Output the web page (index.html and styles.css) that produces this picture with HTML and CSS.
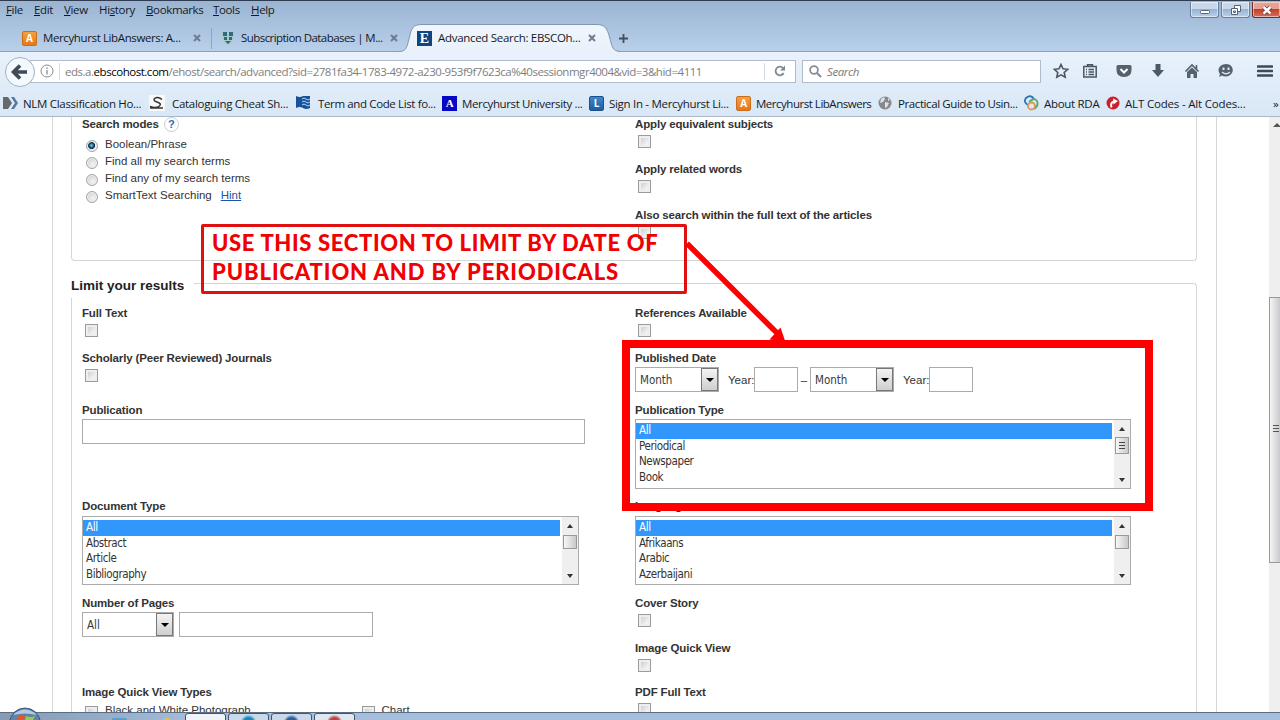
FILE: index.html
```html
<!DOCTYPE html>
<html lang="en">
<head>
<meta charset="utf-8">
<title>Advanced Search: EBSCOhost</title>
<link rel="stylesheet" href="styles.css">
</head>
<body>
<div class="window">
  <header class="titlebar">
    <div class="menu-row">
      <nav class="menu"><span><u>F</u>ile</span><span><u>E</u>dit</span><span><u>V</u>iew</span><span>Hi<u>s</u>tory</span><span><u>B</u>ookmarks</span><span><u>T</u>ools</span><span><u>H</u>elp</span></nav>
      <div class="controls">
        <span class="control"><svg width="28" height="16"><rect x="9.5" y="8.500" width="9" height="3" rx="1" fill="#fff" stroke="#566376"/></svg></span>
        <span class="control"><svg width="28" height="16" fill="#fff" stroke="#566376"><path d="M12.500 3.500h6v6h-6z"/><path d="M9.500 6.500h6v6h-6z"/><path d="M11.500 9h2v1.500h-2z"/></svg></span>
        <span class="control control-close"><svg width="28" height="16"><path d="M10.500 5l7 6.500M17.500 5l-7 6.500" stroke="#6b3a3a" stroke-width="4"/><path d="M10.500 5l7 6.500M17.500 5l-7 6.500" stroke="#fff" stroke-width="2.400"/></svg></span>
      </div>
    </div>
    <div class="tabs">
      <div class="tab tab-one"><span class="fav fav-orange">A</span><span class="tab-text t1">Mercyhurst LibAnswers: A...</span><svg class="x" width="8" height="8"><path d="M1 1l6 6M7 1l-6 6"/></svg></div>
      <div class="tab tab-two"><svg class="shield" width="13" height="15"><path d="M0 1h12v6q-1 5-6 7q-5-2-6-7z" fill="#a9c8cc"/><path d="M1 1h4v4H1zM7 1h4v4H7zM2 6h3v3H2zM7 6h3v3H7zM3 10h6l-3 3z" fill="#2c6c78"/></svg><span class="tab-text t2">Subscription Databases | M...</span><svg class="x" width="8" height="8"><path d="M1 1l6 6M7 1l-6 6"/></svg></div>
      <div class="tab tab-active">
        <svg class="tab-shape" width="222" height="29"><defs><linearGradient id="tg" x2="0" y2="1"><stop stop-color="#f0f6fc"/><stop offset="1" stop-color="#e8f1fb"/></linearGradient></defs><path d="M0 29V27.500C8 27.500 8 22 10.500 13C12.500 4 14 .500 23 .500H197C206 .500 208 4 210.500 13C213 22 213 27.500 222 27.500V29Z" fill="url(#tg)"/><path d="M0 27.500C8 27.500 8 22 10.500 13C12.500 4 14 .500 23 .500H197C206 .500 208 4 210.500 13C213 22 213 27.500 222 27.500" fill="none" stroke="#8196b1"/></svg>
        <span class="fav fav-e">E</span><span class="tab-text t3">Advanced Search: EBSCOh...</span><svg class="x" width="8" height="8"><path d="M1 1l6 6M7 1l-6 6"/></svg>
      </div>
      <svg class="plus" width="11" height="11"><path d="M5.500 1v9M1 5.500h9" stroke="#444f5c" stroke-width="1.800"/></svg>
    </div>
  </header>

  <div class="navbar">
    <div class="back"><svg width="30" height="30"><circle cx="15" cy="15" r="14.500" fill="#f4f9fe" stroke="#9fb0c3"/><path d="M15 8.500l-6.500 6.500l6.500 6.500M9.500 15h12.500" fill="none" stroke="#3f4a57" stroke-width="3.600"/></svg></div>
    <div class="url">
      <svg class="info" width="14" height="14"><circle cx="7" cy="7" r="6" fill="none" stroke="#8c8c8c"/><path d="M7 6v4.500M7 3.500v1.500" stroke="#8c8c8c" stroke-width="1.300"/></svg>
      <span class="url-text">eds.a.<b>ebscohost.com</b>/ehost/search/advanced?sid=2781fa34-1783-4972-a230-953f9f7623ca%40sessionmgr4004&amp;vid=3&amp;hid=4111</span>
      <span class="reload"><svg width="12" height="12"><path d="M9.700 8A4.300 4.300 0 1 1 9 3" fill="none" stroke="#7d8994" stroke-width="1.800"/><path d="M11 .500v5H6z" fill="#7d8994"/></svg></span>
    </div>
    <div class="search"><svg width="13" height="13" fill="none" stroke="#8a8f96"><circle cx="5" cy="5" r="3.900" stroke-width="1.800"/><path d="M8 8l4 4" stroke-width="2.200"/></svg><i>Search</i></div>
    <div class="tools">
      <svg width="16" height="16"><path d="M8 1.500l2 4.300l4.700.500l-3.500 3.200l1 4.700L8 11.900l-4.200 2.300l1-4.700L1.300 6.300L6 5.800z" fill="none" stroke="#4b5663" stroke-width="1.600"/></svg>
      <svg width="16" height="16" fill="none" stroke="#4b5663" stroke-width="1.500"><path d="M1.800 3.500h12.400v10.500H1.800zM5.500 3.500V1.700h5v1.800M4 6.500h1M4 9h1M4 11.500h1M6.500 6.500H12M6.500 9H12M6.500 11.500H12"/></svg>
      <svg width="16" height="16"><path d="M2 2h12q1.500 0 1.500 1.500V7q0 7-7.500 7T.500 7V3.500Q.500 2 2 2z" fill="#56616e"/><path d="M4.500 6l3.500 3.500l3.500-3.500" fill="none" stroke="#fff" stroke-width="2"/></svg>
      <svg width="16" height="16"><path d="M5.500 1h5v6h3.500l-6 7l-6-7h3.500z" fill="#4d5966"/></svg>
      <svg width="16" height="16"><path d="M1.500 8.500L8 2l6.500 6.500M12.500 2v4" fill="none" stroke="#56616e" stroke-width="1.600"/><path d="M3 9l5-4.500L13 9v6h-3.500v-4h-3v4H3z" fill="#56616e"/></svg>
      <svg width="16" height="16"><path d="M8 1c9 0 9 12 0 12.500q-3 0-4-1l-3 1.500l1-3C-2 6 3 1 8 1z" fill="#56616e"/><path d="M4.500 4.500h2v2.500h-2zM9.500 4.500h2v2.500h-2z" fill="#dce9f6"/><path d="M4 9q4 3.500 8 0" fill="none" stroke="#dce9f6" stroke-width="1.300"/></svg>
    </div>
    <svg class="burger" width="16" height="14"><path d="M1 2.500h14M1 7h14M1 11.500h14" stroke="#3f4a57" stroke-width="2.600" stroke-linecap="round"/></svg>
  </div>

  <div class="bookmarks">
    <svg width="16" height="14"><path d="M0 1h5l4 6l-4 6H0z" fill="#65686c"/><path d="M8 1h3l4 6l-4 6H8l4-6z" fill="#5378a4"/></svg><span class="b1">NLM Classification Ho...</span>
    <svg width="16" height="16"><rect width="16" height="16" fill="#f8f8f8"/><path d="M13 4.500Q9 1 5.500 3.500Q4 6 8 7Q13 8.500 10.500 11Q7 13.500 1 11.500M1 13h13" fill="none" stroke="#333" stroke-width="1.500"/></svg><span class="b2">Cataloguing Cheat Sh...</span>
    <svg width="15" height="14"><path d="M0 0q4 2 7 0t7 0v12q-4 2-7 0t-7 0z" fill="#17519b"/><path d="M6 3q2-2 4 0t4 0M6 6q2-2 4 0t4 0M6 9q2-2 4 0t4 0" fill="none" stroke="#b5d5ef"/></svg><span class="b3">Term and Code List fo...</span>
    <span class="fav fav-a">A</span><span class="b4">Mercyhurst University ...</span>
    <span class="fav fav-l">L</span><span class="b5">Sign In - Mercyhurst Li...</span>
    <span class="fav fav-orange">A</span><span class="b6">Mercyhurst LibAnswers</span>
    <svg width="14" height="14"><circle cx="7" cy="7" r="6.500" fill="#85898d"/><path d="M3 3l3-2l1 2l-2 3l-3 1zM7 6l4 1l-2 4l-2 1zM10 2l2 2l-2 1z" fill="#dfe3e6"/></svg><span class="b7">Practical Guide to Usin...</span>
    <svg width="15" height="16" fill="none" stroke-width="1.800"><path d="M4 10Q-1 7 2 3Q7-1 10 4" stroke="#2676b6"/><path d="M5 7q5-5 8-1q2 5-3 8" stroke="#56a866"/><circle cx="7.500" cy="11" r="3.500" stroke="#e09455"/></svg><span class="b8">About RDA</span>
    <svg width="14" height="14"><circle cx="7" cy="7" r="6.500" fill="#c8202c"/><path d="M5.500 11.500Q4 6.500 8 5.500" fill="none" stroke="#fff" stroke-width="2"/><path d="M7 2.500l5 2.500l-4.500 3.500z" fill="#fff"/></svg><span class="b9">ALT Codes - Alt Codes...</span>
    <span class="more">»</span>
  </div>

  <main class="viewport">
    <div class="page">
      <div class="frame">
        <section class="modes">
          <div class="mode-list">
            <div class="label mode-title"><span>Search modes</span><span class="help">?</span></div>
            <div class="radio-row"><i class="radio on"></i><span>Boolean/Phrase</span></div>
            <div class="radio-row"><i class="radio"></i><span>Find all my search terms</span></div>
            <div class="radio-row"><i class="radio"></i><span>Find any of my search terms</span></div>
            <div class="radio-row"><i class="radio"></i><span>SmartText Searching</span><a>Hint</a></div>
          </div>
          <div class="expanders">
            <div class="field"><div class="label">Apply equivalent subjects</div><i class="check"></i></div>
            <div class="field"><div class="label">Apply related words</div><i class="check"></i></div>
            <div class="field"><div class="label">Also search within the full text of the articles</div><i class="check"></i></div>
          </div>
        </section>
        <div class="legend"><h2>Limit your results</h2><span class="rule"></span></div>
        <section class="limits">
          <div class="field"><div class="label">Full Text</div><i class="check"></i></div>
          <div class="field"><div class="label">References Available</div><i class="check"></i></div>
          <div class="field"><div class="label">Scholarly (Peer Reviewed) Journals</div><i class="check"></i></div>
          <div class="field"><div class="label">Published Date</div>
            <div class="controls-row"><span class="select month">Month<i class="drop"></i></span><span class="year">Year:</span><span class="input short"></span><span class="dash">–</span><span class="select month">Month<i class="drop"></i></span><span class="year">Year:</span><span class="input short"></span></div></div>
          <div class="field"><div class="label">Publication</div><div class="controls-row"><span class="input wide"></span></div></div>
          <div class="field"><div class="label">Publication Type</div>
            <div class="list right"><div class="options"><span class="sel">All</span><span>Periodical</span><span>Newspaper</span><span>Book</span></div><div class="bar"><i class="up"></i><i class="thumb grip"></i><i class="down"></i></div></div></div>
          <div class="field"><div class="label">Document Type</div>
            <div class="list low"><div class="options"><span class="sel">All</span><span>Abstract</span><span>Article</span><span>Bibliography</span></div><div class="bar"><i class="up"></i><i class="thumb"></i><i class="down"></i></div></div></div>
          <div class="field"><div class="label">Language</div>
            <div class="list low right"><div class="options"><span class="sel">All</span><span>Afrikaans</span><span>Arabic</span><span>Azerbaijani</span></div><div class="bar"><i class="up"></i><i class="thumb"></i><i class="down"></i></div></div></div>
          <div class="field"><div class="label">Number of Pages</div><div class="controls-row pages"><span class="select count">All<i class="drop"></i></span><span class="input mid"></span></div></div>
          <div class="field"><div class="label">Cover Story</div><i class="check"></i></div>
          <div class="field"></div>
          <div class="field"><div class="label">Image Quick View</div><i class="check"></i></div>
          <div class="field"><div class="label">Image Quick View Types</div><div class="types"><i class="check"></i><span>Black and White Photograph</span><i class="check"></i><span>Chart</span></div></div>
          <div class="field"><div class="label">PDF Full Text</div><i class="check"></i></div>
        </section>
      </div>
    </div>
    <div class="scrollbar"><i class="sb-up"></i><div class="sb-thumb"><i></i></div></div>
  </main>

  <footer class="taskbar">
    <i class="glow g1"></i><i class="glow g2"></i>
    <div class="apps"><span class="app app-white"></span><span class="app c1"></span><span class="app c2"></span><span class="app c3"></span></div>
    <svg class="orb" width="34" height="13"><circle cx="17" cy="16.500" r="15.500" fill="#5c84ac" stroke="#385878"/><path d="M5 8Q17-3 29 8Q17 5 5 8z" fill="#b4cbe0"/><path d="M8 13q3-7 9-5l-1 5z" fill="#e2582d"/><path d="M18 9q5 2 9 0l-2 4h-8z" fill="#9cc750"/></svg>
  </footer>

  <div class="callout"><div class="c-line1">USE THIS SECTION TO LIMIT BY DATE OF</div><div class="c-line2">PUBLICATION AND BY PERIODICALS</div></div>
  <svg class="arrow" width="110" height="110"><path d="M4 5.500L95 96" stroke="#f00" stroke-width="5.500"/><path d="M86.500 101.500L97.500 89.500L102.500 104z" fill="#f00"/></svg>
  <div class="highlight"></div>
</div>
</body>
</html>
```
FILE: styles.css
```css
* { box-sizing: border-box; }
body { margin: 0; font-family: "Open Sans", "Noto Sans", sans-serif; font-size: 12px; color: #15191f; overflow: hidden; }
i { font-style: normal; }
svg { display: block; flex: none; }
.window { position: relative; width: 1280px; height: 720px; display: flex; flex-direction: column; overflow: hidden; background: #fff; }

/* Title bar */
.titlebar { height: 52px; flex: none; border-top: 1px solid #2f3d52; border-bottom: 1px solid #8ba0bb; background: linear-gradient(#9bb4d2, #b8d0ea); }
.menu-row { display: flex; justify-content: space-between; height: 23px; }
.menu { display: grid; grid-template-columns: 28px 30px 35px 47px 67px 38px 40px; padding-left: 6px; line-height: 18px; font-size: 11.5px; letter-spacing: -.35px; white-space: nowrap; }
.controls { display: flex; gap: 2px; padding-top: 1px; margin-right: -1px; }
.control { width: 29px; height: 16px; border: 1px solid #67809f; border-top: 0; border-radius: 0 0 3px 3px; background: linear-gradient(#c7d8eb 45%, #98b3d2 50%, #b9d0e8); box-shadow: inset 0 0 0 1px rgba(255,255,255,.5); }
.control-close { background: linear-gradient(#e5a194 45%, #c2412c 50%, #d4705c); border-color: #6c2d2d; }
.tabs { display: flex; height: 28px; align-items: center; }
.tab { position: relative; display: flex; align-items: center; height: 28px; white-space: nowrap; }
.tab-text { font-size: 11.5px; letter-spacing: -.3px; line-height: 16px; }
.t1 { letter-spacing: -.38px; }
.t2 { letter-spacing: -.56px; }
.tab .x { position: relative; margin-left: auto; stroke: #6d7c8f; stroke-width: 2; }
.tab-one { width: 212px; padding: 0 11px 0 22px; }
.tab-one .tab-text { margin-left: 6px; }
.tab-one::after { content: ""; position: absolute; right: 0; top: 4px; height: 21px; width: 1px; background: #8fa5c0; }
.tab-two { width: 190px; padding: 0 4px 0 10px; }
.tab-two .tab-text { margin-left: 6px; }
.shield { margin-top: 1px; }
.tab-active { width: 216px; padding: 0 22px 0 15px; }
.tab-active .tab-text { position: relative; margin-left: 6px; }
.tab-shape { position: absolute; left: -3px; top: 0; }
.fav { position: relative; flex: none; width: 15px; height: 15px; text-align: center; font: bold 10px/15px "Open Sans", sans-serif; color: #fff; border-radius: 2px; }
.fav-orange { background: linear-gradient(#f6a040, #e87812); border: 1px solid #c86d1c; line-height: 13px; }
.fav-e { background: #0d4680; font: bold 14px/15px "Liberation Serif", serif; border-radius: 0; }
.fav-a { background: #0606c6; font: bold 11px/15px "Liberation Serif", serif; border-radius: 0; }
.fav-l { background: linear-gradient(#3f88c8, #1f5da0); border: 1px solid #1c5089; line-height: 13px; }

/* Navigation */
.navbar { height: 38px; flex: none; display: flex; align-items: center; background: linear-gradient(#e9f2fc, #dfebf8); }
.back { position: relative; z-index: 1; width: 30px; margin: 1px 0 0 5px; }
.url { display: flex; align-items: center; height: 23px; width: 766px; margin-left: -5px; padding-left: 9px; background: #fff; border: 1px solid #aebccd; white-space: nowrap; }
.url-text { margin-left: 5px; padding-left: 5px; border-left: 1px solid #ddd; line-height: 17px; font-size: 11.500px; letter-spacing: -.47px; color: #7e7e7e; }
.url-text b { font-weight: 400; color: #000; }
.reload { display: flex; align-items: center; justify-content: center; height: 17px; width: 31px; margin-left: auto; border-left: 1px solid #d5dbe2; }
.search { display: flex; align-items: center; gap: 5px; width: 239px; height: 23px; margin-left: 6px; padding-left: 6px; background: #fff; border: 1px solid #aebccd; font-size: 11.5px; letter-spacing: -.4px; color: #7a7a7a; }
.search i { font-style: italic; }
.tools { display: grid; grid-template-columns: 29px 34px 34px 34px 34px 30px; margin-left: 12px; }
.burger { margin-left: 9px; }

/* Bookmarks */
.bookmarks { height: 27px; flex: none; display: grid; align-items: center; grid-template-columns: 20px 126px 23px 124px 22px 124px 20px 127px 20px 127px 20px 122px 20px 126px 20px 62px 19px 148px 10px; padding-left: 3px; font-size: 11.5px; letter-spacing: -.3px; white-space: nowrap; background: linear-gradient(#dfebf8, #d9e7f6); border-bottom: 1px solid #aab8c8; }
.b3, .b4 { letter-spacing: -.37px; }
.b6 { letter-spacing: -.48px; }
.b7 { letter-spacing: -.4px; }
.b9 { letter-spacing: -.18px; }

/* Page */
.viewport { height: 595px; flex: none; display: flex; justify-content: space-between; overflow: hidden; font-family: "Liberation Sans", Arial, sans-serif; color: #333; }
.page { width: 1217px; padding-left: 52px; margin-top: -1px; }
.frame { height: 620px; border: solid #d6d6d6; border-width: 0 1px; padding: 0 19px 0 18px; }
.modes { display: grid; grid-template-columns: 553px 1fr; height: 145px; padding-left: 10px; border: 1px solid #d6d6d6; border-top: 0; border-radius: 0 0 4px 4px; }
.label { height: 16px; line-height: 16px; font-weight: 700; font-size: 11.5px; letter-spacing: -.15px; white-space: nowrap; }
.mode-title { display: flex; align-items: center; gap: 5px; margin-bottom: 3px; }
.help { width: 15px; height: 15px; border: 1px solid #c4ccd4; border-radius: 50%; text-align: center; font-size: 11px; line-height: 13px; color: #2a6cc4; }
.radio-row { display: flex; align-items: center; height: 17.200px; padding-left: 4px; font-size: 11.5px; white-space: nowrap; }
.radio { width: 12px; height: 12px; margin: 4px 7px 0 0; border: 1px solid #a2a4a5; border-radius: 50%; background: radial-gradient(circle at 60% 65%, #f4f4f4, #c4c8cc); box-shadow: inset 0 0 0 1px #f2f2f2; }
.radio.on { background: radial-gradient(circle at 45% 45%, #7fd6f4 0, #1a4c6e 30%, #16344c 42%, #e8ecef 50%); }
.radio-row a { margin-left: 9px; color: #1a55b0; text-decoration: underline; }
.expanders .field { height: 45.300px; }
.check { display: block; flex: none; width: 13px; height: 13px; margin: 3px 0 0 3px; border: 1px solid #9b9b9b; background: linear-gradient(135deg, #c3c6ca, #f4f4f4 75%); box-shadow: inset 0 0 0 2px #eee; }
.legend { display: flex; align-items: flex-start; height: 37px; gap: 10px; padding-top: 16px; }
.legend h2 { margin: 0; font-size: 13.5px; line-height: 18px; color: #222; white-space: nowrap; }
.rule { flex: 1; height: 16px; margin-top: 6px; border-top: 1px solid #d6d6d6; border-right: 1px solid #d6d6d6; border-radius: 0 4px 0 0; }
.limits { display: grid; grid-template-columns: 553px 1fr; grid-template-rows: 45px 52px 96px 97px 45px 44px 60px; padding: 7px 0 0 10px; border: solid #d6d6d6; border-width: 0 1px; }
.controls-row { display: flex; margin-top: 1px; align-items: center; font-size: 11.5px; }
.input { height: 25px; border: 1px solid #ababab; background: #fff; }
.short { width: 44px; }
.wide { width: 503px; }
.mid { width: 194px; margin-left: 5px; }
.select { position: relative; height: 25px; border: 1px solid #ababab; padding-left: 4px; font: 11.5px/24px "DejaVu Sans Condensed", "DejaVu Sans", sans-serif; letter-spacing: 0; }
.month { width: 84px; }
.count { width: 92px; }
.count, .month { color: #3a3a3a; }
.drop { position: absolute; right: 0; top: 0; width: 17px; height: 23px; border: 1px solid #777; background: linear-gradient(#f3f3f3, #cfcfcf); }
.drop::after { content: ""; position: absolute; left: 4px; top: 9px; border: 4px solid transparent; border-top: 4px solid #000; border-bottom: 0; }
.year { width: 35px; padding-left: 9px; white-space: nowrap; }
.dash { width: 12px; text-align: center; }
.list { display: flex; width: 497px; height: 70px; margin-top: 1px; border: 1px solid #ababab; font: 11.5px/15.600px "DejaVu Sans Condensed", "DejaVu Sans", sans-serif; letter-spacing: -.4px; }
.list.low { height: 69px; margin-top: 2px; }
.list.right { width: 496px; }
.options { flex: 1; padding-top: 3px; display: grid; grid-auto-rows: 15.600px; margin-right: 2px; }
.options span { padding-left: 3px; }
.sel { background: #3197fd; color: #fff; }
.bar { width: 16px; background: #efefef; display: flex; flex-direction: column; align-items: center; }
.up { margin-top: 7px; border: 3px solid transparent; border-bottom: 4px solid #333; border-top: 0; }
.thumb { width: 14px; height: 14px; margin-top: 7px; border: 1px solid #999; background: linear-gradient(90deg, #f7f7f7, #c8c8cc); }
.grip { height: 17px; margin-top: 6px; padding: 4px 3px; }
.grip::after { content: ""; display: block; height: 7px; background: repeating-linear-gradient(#444 0 1px, transparent 1px 3px); }
.down { margin: auto 0 6px; border: 3px solid transparent; border-top: 4px solid #333; border-bottom: 0; }
.types { display: flex; font-size: 11.5px; line-height: 14px; margin-top: 3px; white-space: nowrap; }
.types span { width: 261px; padding-left: 7px; }
.scrollbar { width: 11px; background: #efefef; }
.sb-up { display: block; margin: 6px 0 0 4px; width: 0; border: 4px solid transparent; border-top: 0; border-bottom: 4px solid #555; }
.sb-thumb { height: 266px; margin-top: 170px; padding: 127px 0 0 3px; border: 1px solid #999; border-right: 0; background: linear-gradient(90deg, #f5f5f5, #c9c9cd); }
.sb-thumb i { display: block; width: 6px; height: 9px; background: repeating-linear-gradient(#555 0 1px, transparent 1px 3px); }

/* Taskbar */
.taskbar { position: relative; height: 8px; flex: none; border-top: 1px solid #5c6d83; background: linear-gradient(90deg, #879bb3, #8ea5c0 60px, #a5bedc 200px, #a5bedc); }
.apps { display: flex; gap: 2px; margin-left: 185px; }
.app { width: 41px; height: 8px; border: 1px solid #42566f; border-radius: 3px 3px 0 0; background: #cad9ea; }
.app-white { background: #f0f4f8; }
.c1 { background: radial-gradient(circle at 50% 145%, #168ac0 0 5px, #cad9ea 8px); }
.c2 { background: radial-gradient(circle at 50% 145%, #2c5f98 0 5px, #cad9ea 8px); }
.c3 { background: radial-gradient(circle at 50% 145%, #bd4440 0 5px, #dfe7f0 8px); }
.orb { position: absolute; left: 8px; top: -6px; }
.glow { position: absolute; height: 3px; top: 5px; border-radius: 2px; }
.g1 { left: 112px; width: 15px; background: #5c9fc4; }
.g2 { left: 164px; width: 6px; background: #d9c16a; }

/* Annotations */
.callout { position: absolute; left: 201px; top: 224px; width: 486px; height: 70px; padding: 1px 0 0 8px; border: 3px solid #e01010; border-radius: 2px; font: 900 22px/29px Lato, "Open Sans", sans-serif; color: #f00000; white-space: nowrap; }
.c-line1 { letter-spacing: .67px; }
.c-line2 { letter-spacing: .9px; }
.arrow { position: absolute; left: 683px; top: 238px; }
.highlight { position: absolute; left: 622px; top: 340px; width: 531px; height: 171px; border: 8px solid #f00; }
```
